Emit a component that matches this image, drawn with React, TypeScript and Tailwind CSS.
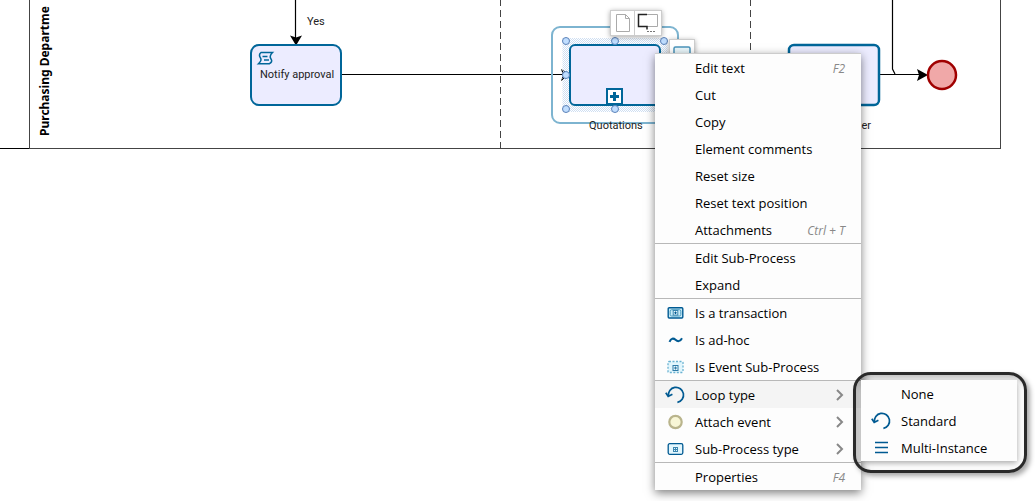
import type { ReactNode } from "react";

type Item = {
  label: string;
  icon?: ReactNode;
  shortcut?: string;
  submenu?: Item[];
};

function LoopIcon() {
  return (
    <svg viewBox="0 0 20 20" className="size-5" fill="none" stroke="#005a92" strokeWidth="1.7">
      <path d="M3.4 11A7.6 7.6 0 1 1 12.4 17.4" />
      <path d="M0.8 7.8l2.4 3.7 4.2-2.2" />
    </svg>
  );
}

function LinesIcon() {
  return (
    <svg viewBox="0 0 20 20" className="size-5" stroke="#005a92" strokeWidth="1.5">
      <path d="M4 4.5h13M4 9.5h13M4 14.5h13" />
    </svg>
  );
}

function TransactionIcon() {
  return (
    <svg viewBox="0 0 20 20" className="size-5" fill="none">
      <rect x="3.2" y="4.7" width="14.6" height="10.3" rx="1" fill="#c9ecf8" stroke="#005a92" strokeWidth="1.4" />
      <rect x="5.2" y="6.7" width="10.6" height="6.3" rx="1.5" stroke="#4d9cc0" />
      <rect x="8.2" y="7.5" width="4.6" height="4.6" fill="#e8f7fc" stroke="#3b86b0" />
      <path d="M9.2 9.8h2.6M10.5 8.5v2.6" stroke="#005a92" />
    </svg>
  );
}

function TildeIcon() {
  return (
    <svg viewBox="0 0 20 20" className="size-5" fill="none" stroke="#005a92" strokeWidth="2">
      <path d="M4.5 11.8C6 8 8.500 8 10.500 9.800S15 12 17 8.200" />
    </svg>
  );
}

function EventSubProcessIcon() {
  return (
    <svg viewBox="0 0 20 20" className="size-5" fill="none">
      <rect x="3" y="4.500" width="15" height="11" rx="1" fill="#e2f6fd" stroke="#6bb3d2" strokeWidth="1.300" strokeDasharray="2 1.500" />
      <rect x="8" y="8.500" width="5" height="5" fill="#e8f7fc" stroke="#2f7ba8" />
      <path d="M9 11h3M10.500 9.500v3" stroke="#2f7ba8" />
    </svg>
  );
}

function EventIcon() {
  return (
    <svg viewBox="0 0 20 20" className="size-5" fill="#f8f6d6">
      <circle cx="10.500" cy="10" r="6.200" stroke="#b9b48c" strokeWidth="2.200" />
    </svg>
  );
}

function SubProcessIcon() {
  return (
    <svg viewBox="0 0 20 20" className="size-5" fill="none">
      <rect x="3.200" y="4.700" width="14.600" height="10.600" rx="1.500" fill="#e2f6fd" stroke="#005a92" strokeWidth="1.300" />
      <rect x="8.500" y="8.500" width="4" height="4" stroke="#3b86b0" />
      <path d="M9 10.500h3M10.500 9v3" stroke="#3b86b0" />
    </svg>
  );
}

function Chevron() {
  return (
    <svg viewBox="0 0 10 14" className="h-3.5 w-2.5" fill="none" stroke="#888" strokeWidth="2">
      <path d="M2 2l5 5-5 5" />
    </svg>
  );
}

const loopTypes: Item[] = [
  { label: "None" },
  { label: "Standard", icon: <LoopIcon /> },
  { label: "Multi-Instance", icon: <LinesIcon /> },
];

const groups: Item[][] = [
  [
    { label: "Edit text", shortcut: "F2" },
    { label: "Cut" },
    { label: "Copy" },
    { label: "Element comments" },
    { label: "Reset size" },
    { label: "Reset text position" },
    { label: "Attachments", shortcut: "Ctrl + T" },
  ],
  [{ label: "Edit Sub-Process" }, { label: "Expand" }],
  [
    { label: "Is a transaction", icon: <TransactionIcon /> },
    { label: "Is ad-hoc", icon: <TildeIcon /> },
    { label: "Is Event Sub-Process", icon: <EventSubProcessIcon /> },
  ],
  [
    { label: "Loop type", icon: <LoopIcon />, submenu: loopTypes },
    { label: "Attach event", icon: <EventIcon />, submenu: [] },
    { label: "Sub-Process type", icon: <SubProcessIcon />, submenu: [] },
  ],
  [{ label: "Properties", shortcut: "F4" }],
];

function MenuItem({ item }: { item: Item }) {
  const open = Boolean(item.submenu?.length);
  return (
    <li role="none" className="relative">
      <button
        type="button"
        role="menuitem"
        aria-haspopup={item.submenu ? "menu" : undefined}
        aria-expanded={item.submenu ? open : undefined}
        className={`flex h-[27px] w-full items-center pr-4 text-left whitespace-nowrap ${open ? "bg-[#f4f4f4]" : "hover:bg-[#f4f4f4]"}`}
      >
        <span className="flex w-10 shrink-0 justify-center">{item.icon}</span>
        <span className="flex-1 pt-0.5">{item.label}</span>
        {item.shortcut && (
          <kbd className="pt-0.5 font-[Open_Sans,sans-serif] text-xs text-[#888] italic">{item.shortcut}</kbd>
        )}
        {item.submenu && <Chevron />}
      </button>
      {open && (
        <div className="absolute -top-[9px] left-[198px] rounded-[18px] border-3 border-[#2a2a2a] pt-[5px] pr-[7px] pb-[9px] pl-[5px] shadow-[3px_3px_5px_rgba(0,0,0,0.35),inset_3px_3px_5px_rgba(0,0,0,0.25)]">
          <ul role="menu" aria-label={item.label} className="w-[156px] bg-[#fdfdfd] shadow-[0_2px_6px_rgba(0,0,0,0.35)]">
            {item.submenu?.map((child) => (
              <MenuItem key={child.label} item={child} />
            ))}
          </ul>
        </div>
      )}
    </li>
  );
}

function ContextMenu() {
  return (
    <div
      role="menu"
      aria-label="Element"
      className="absolute top-[53px] left-[655px] w-[206px] divide-y divide-[#b8b8b8] border-t border-[#ccc] bg-[#fdfdfd] text-[13px] text-black shadow-[0_3px_9px_rgba(0,0,0,0.5)]"
    >
      {groups.map((group) => (
        <ul key={group[0].label} role="group">
          {group.map((item) => (
            <MenuItem key={item.label} item={item} />
          ))}
        </ul>
      ))}
    </div>
  );
}

const handles = [
  [566, 41],
  [615, 41],
  [664, 41],
  [566, 75],
  [566, 109],
  [615, 109],
];

function Diagram() {
  return (
    <svg
      width="1035"
      height="160"
      className="block font-[Roboto,sans-serif] text-[11px]"
      fill="none"
      role="img"
      aria-label="Purchasing process"
    >
      <defs>
        <pattern id="checks" width="2" height="2" patternUnits="userSpaceOnUse">
          <path d="M0 0h1v1H0zM1 1h1v1H1z" fill="#cfdff2" />
        </pattern>
      </defs>

      {/* pool and lanes */}
      <g shapeRendering="crispEdges" stroke="#444">
        <path d="M29.5 0V148.500H1000.500V0" />
        <path d="M0 148.500H29" stroke="#000" />
        <path d="M500.500 0V148M750.500 0V148" strokeDasharray="7 4" strokeDashoffset="1" />
      </g>
      <text transform="translate(49 136) rotate(-90)" fill="#000" className="font-[Noto_Sans,sans-serif] text-xs font-bold">
        Purchasing Departme
      </text>

      {/* flows */}
      <g stroke="#000" strokeWidth="1.200">
        <path d="M295.500 0V38M341 74.500H563M879 74.500H920M892.500 0V69L895 74" />
      </g>
      <g fill="#000">
        <path d="M290 35.500L296 37.500 302 35.500 296 45.500z" />
        <path d="M561 69L571 75 561 81 563 75z" />
        <path d="M917 69L928 75 917 81 919 75z" />
      </g>
      <text x="307" y="25" fill="#222">
        Yes
      </text>

      {/* script task */}
      <rect x="251" y="45" width="90" height="60" rx="8" fill="#ececff" stroke="#006699" strokeWidth="2" />
      <g stroke="#006699" strokeWidth="1.500">
        <path d="M261 52.500H272.500C269.500 55.500 269.500 57 271 59S271.500 62.500 269.500 63.700H258.500C261.500 61 261.500 59.500 260.500 58S259 54 261 52.500z" />
        <path d="M262.500 56.500h5M264 60h5" />
      </g>
      <text x="260" y="78" fill="#222">
        Notify approval
      </text>

      {/* selected sub-process */}
      <rect x="552" y="27" width="126" height="96" rx="8" stroke="#7db4d0" strokeWidth="2" />
      <rect x="566" y="41.500" width="98" height="67" stroke="url(#checks)" strokeWidth="7" />
      <rect x="570" y="45" width="90" height="60" rx="5" fill="#ececff" stroke="#006699" strokeWidth="2" />
      <rect x="607" y="89" width="15" height="15" fill="#fff" stroke="#006699" strokeWidth="2" />
      <path d="M614.500 92v9M610 96.500h9" stroke="#006699" strokeWidth="3" />
      {handles.map(([cx, cy]) => (
        <circle key={`${cx}-${cy}`} cx={cx} cy={cy} r="3.500" fill="#c0deff" stroke="#5c82b8" />
      ))}
      <text x="589" y="129" fill="#222">
        Quotations
      </text>

      {/* next task and end event */}
      <rect x="789" y="45" width="90" height="60" rx="5" fill="#ececff" stroke="#006699" strokeWidth="2.500" />
      <text x="871" y="129" fill="#222" textAnchor="end">
        er
      </text>
      <circle cx="942" cy="75" r="14" fill="#f0a8a8" stroke="#a00000" strokeWidth="2.500" />
    </svg>
  );
}

function QuickTools() {
  return (
    <>
      <div className="absolute top-[10px] left-[610px] flex divide-x divide-[#ccc] border border-[#ccc] bg-white shadow-[0_1px_5px_rgba(0,0,0,0.35)]">
        <button type="button" aria-label="Add data object" className="h-6 w-6">
          <svg viewBox="0 0 24 24" className="size-6" fill="#fff" stroke="#aaa">
            <path d="M5.500 3.500H14.500L18.500 7.500V20.500H5.500zM14.500 3.500V7.500H18.500" />
          </svg>
        </button>
        <button type="button" aria-label="Add annotation" className="h-6 w-[26px]">
          <svg viewBox="0 0 26 24" className="h-6 w-[26px]" fill="none" stroke="#222">
            <path d="M12 3.500H22.500V15.500H12" stroke="#aaa" />
            <path d="M12 3.500H3.500V15.500H12V18.500" strokeWidth="1.500" />
            <path d="M12 20.500h9" stroke="#777" strokeDasharray="2 1" />
          </svg>
        </button>
      </div>
      <button
        type="button"
        aria-label="Add task"
        className="absolute top-[39px] left-[669px] h-[26px] w-[26px] border border-[#ccc] bg-white shadow-[0_1px_5px_rgba(0,0,0,0.35)]"
      >
        <svg viewBox="0 0 24 24" className="size-6">
          <rect x="4" y="7" width="16" height="11" rx="1.500" fill="#eaf7fb" stroke="#4a94bb" strokeWidth="1.500" />
        </svg>
      </button>
    </>
  );
}

export default function App() {
  return (
    <main className="relative min-h-screen overflow-hidden bg-white font-[Open_Sans,sans-serif]">
      <Diagram />
      <QuickTools />
      <ContextMenu />
    </main>
  );
}
